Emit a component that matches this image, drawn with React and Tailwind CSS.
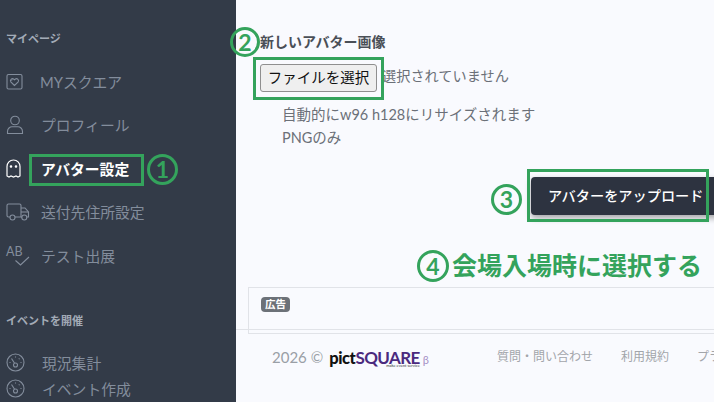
import React from "react";

const font = { fontFamily: '"Lato", "Noto Sans CJK JP", sans-serif' };

const HeartSquareIcon = () => (
  <svg width="18" height="18" viewBox="0 0 18 18" fill="none" stroke="currentColor" strokeWidth="1.1">
    <rect x="1" y="1.5" width="15" height="14.5" rx="1.5" />
    <path d="M8.5 12.5 L4.8 8.8 C3.6 7 5.8 4.8 7.6 6 L8.5 6.8 L9.4 6 C11.2 4.8 13.4 7 12.2 8.8 Z" />
    <path d="M5.5 7.8 C5.4 7.2 6 6.6 6.6 6.7" strokeWidth="0.7" />
  </svg>
);

const UserIcon = () => (
  <svg width="18" height="20" viewBox="0 0 18 20" fill="none" stroke="currentColor" strokeWidth="1.1">
    <circle cx="9" cy="5.5" r="4.3" />
    <path d="M1.5 18.5 V16.5 C1.5 13.5 4 11.8 6 11.8 H12 C14 11.8 16.5 13.5 16.5 16.5 V18.5 Z" />
  </svg>
);

const GhostIcon = () => (
  <svg width="15" height="19" viewBox="0 0 15 19" fill="none" stroke="currentColor" strokeWidth="1.2">
    <path d="M1 17 V7.5 C1 3.8 3.8 1 7.5 1 C11.2 1 14 3.8 14 7.5 V17 L12 18 L10 17 L7.5 18 L5 17 L3 18 Z" />
    <circle cx="5" cy="7.5" r="0.7" fill="currentColor" />
    <circle cx="10" cy="7.5" r="0.7" fill="currentColor" />
  </svg>
);

const TruckIcon = () => (
  <svg width="24" height="18" viewBox="0 0 24 18" fill="none" stroke="currentColor" strokeWidth="1.1">
    <path d="M4 14 H2.5 C1.5 14 1 13.4 1 12.5 V2.5 C1 1.5 1.6 1 2.5 1 H13.5 C14.4 1 15 1.5 15 2.5 V14 H9" />
    <path d="M15 5 H19 L22.5 9 V14 H20.5" />
    <path d="M15 9 H22" />
    <path d="M15 14 H16" />
    <circle cx="6.5" cy="14.5" r="2.5" />
    <circle cx="18.3" cy="14.5" r="2.5" />
  </svg>
);

const ChecksIcon = () => (
  <svg width="24" height="22" viewBox="0 0 24 22" fill="none" stroke="currentColor" strokeWidth="1.1">
    <path d="M9.5 15.5 L14.5 20 L23 12" />
  </svg>
);

const GaugeIcon = () => (
  <svg width="19" height="19" viewBox="0 0 19 19" fill="none" stroke="currentColor" strokeWidth="1.1">
    <circle cx="9.5" cy="9.5" r="8.5" />
    <circle cx="9.5" cy="12" r="2" />
    <path d="M8.6 10.2 L5.5 5.5" />
    <path d="M9.5 3.5 V4.5 M13.5 5.5 L12.8 6.2 M15.5 9.5 H14.5 M4.5 9.5 H3.5" />
  </svg>
);

const navItems = [
  { label: "MYスクエア", icon: <HeartSquareIcon />, text: "ml-[16px]" },
  { label: "プロフィール", icon: <UserIcon />, text: "ml-[17px]" },
  { label: "アバター設定", icon: <GhostIcon />, text: "ml-[20px]", active: true },
  { label: "送付先住所設定", icon: <TruckIcon />, text: "ml-[11px]" },
  { label: "テスト出展", icon: null, text: "ml-[11px]" },
];

const Marker = ({ n, className }) => (
  <div
    className={`absolute flex items-center justify-center rounded-full border-[3px] border-[#34a35c] bg-transparent text-[23px] leading-none font-bold text-[#34a35c] ${className}`}
  >
    {n}
  </div>
);

const Sidebar = () => (
  <aside className="flex h-[402px] w-[236px] shrink-0 flex-col overflow-hidden bg-[#333b48] pt-[31px] pl-[6px]">
    <p className="text-[11px] leading-[15px] font-bold text-[#a3abb7]">マイページ</p>
    <ul className="mt-[14px] flex flex-col">
      {navItems.map((item) => (
        <li key={item.label} className={`flex h-[43.5px] items-center ${item.active ? "text-white" : "text-[#838d9c]"}`}>
          {item.icon ? (
            item.icon
          ) : (
            <span className="relative flex h-[22px] w-[24px] shrink-0">
              <span className="text-[12.5px] leading-[14px]">AB</span>
              <span className="absolute top-0 left-0">
                <ChecksIcon />
              </span>
            </span>
          )}
          <span className={`text-[14.8px] ${item.active ? "font-bold" : ""} ${item.text}`}>{item.label}</span>
        </li>
      ))}
    </ul>
    <p className="mt-[35px] text-[11px] leading-[15px] font-bold text-[#a3abb7]">イベントを開催</p>
    <div className="mt-[22px] flex h-[43.5px] items-center text-[#838d9c]">
      <GaugeIcon />
      <span className="ml-[17px] text-[14.8px]">現況集計</span>
    </div>
    <div className="flex h-[43.5px] items-center text-[#838d9c]">
      <GaugeIcon />
      <span className="ml-[17px] text-[14.8px]">イベント作成</span>
    </div>
  </aside>
);

const Footer = () => (
  <footer className="mt-[12px] flex items-center whitespace-nowrap pl-[36px]">
    <span className="text-[15px] text-[#9a9fa6]">2026 ©</span>
    <span className="ml-[6px] flex items-baseline">
      <span className="text-[16.5px] leading-none font-black tracking-[-0.4px] text-[#111]">pict</span>
      <span className="relative text-[17px] leading-none font-bold tracking-[-0.6px] text-[#4b2a7e]">
        SQUARE
        <span className="absolute top-[15px] right-0 text-[4px] leading-none font-normal tracking-normal text-[#333]">
          make event service
        </span>
      </span>
      <span className="ml-[3px] text-[11px] leading-none text-[#a58fc5]">β</span>
    </span>
    <a className="ml-[68px] text-[12px] text-[#a2a5aa]">質問・問い合わせ</a>
    <a className="ml-[28px] text-[12px] text-[#a2a5aa]">利用規約</a>
    <a className="ml-[28px] text-[12px] text-[#a2a5aa]">プライバシー</a>
  </footer>
);

export default function App() {
  return (
    <div className="relative flex h-[402px] w-[714px] overflow-hidden bg-[#f9fafe]" style={font}>
      <Sidebar />

      <main className="min-w-0 flex-1 whitespace-nowrap">
        <div className="pt-[32px] pl-[24px]">
          <label className="block text-[14px] leading-[20px] font-bold text-[#4a4f57]">新しいアバター画像</label>
          <div className="mt-[12px] flex items-center">
            <button className="h-[28px] w-[117px] rounded-[3px] border border-[#8f8f8f] bg-[#efefef] text-[14.5px] text-[#111]">
              ファイルを選択
            </button>
            <span className="ml-[5px] -translate-y-[2px] text-[14.2px] text-[#6b7078]">選択されていません</span>
          </div>
          <div className="mt-[11px] pl-[22px] text-[14.5px] leading-[23px] text-[#6b7078]">
            <p>自動的にw96 h128にリサイズされます</p>
            <p>PNGのみ</p>
          </div>
        </div>

        <div className="mt-[28px] flex justify-start pl-[295px]">
          <button className="h-[38px] w-[200px] shrink-0 rounded-l-[4px] bg-[#2d3340] pl-[17px] text-left text-[14.2px] font-medium text-white shadow-[0_3px_6px_rgba(0,0,0,0.35)]">
            アバターをアップロード
          </button>
        </div>

        <div className="mt-[72px] ml-[12px] h-[47px] border-t border-b border-l border-[#e1e3e8]">
          <span className="mt-[9px] ml-[12px] inline-block rounded-[4px] bg-[#6c7178] px-[4px] text-[10.5px] leading-[15px] font-bold text-white">
            広告
          </span>
        </div>
        <Footer />
      </main>

      {/* annotations drawn over the page */}
      <div className="absolute top-[154px] left-[29px] h-[32px] w-[115px] border-[3px] border-[#34a35c]" />
      <div className="absolute top-[57px] left-[253px] h-[43px] w-[131px] border-[3px] border-[#34a35c]" />
      <div className="absolute top-[169px] left-[527px] h-[53px] w-[182px] border-[3px] border-[#34a35c]" />
      <Marker n="1" className="top-[154px] left-[147px] h-[31px] w-[31px]" />
      <Marker n="2" className="top-[27px] left-[230px] h-[30px] w-[30px]" />
      <Marker n="3" className="top-[184px] left-[491px] h-[31px] w-[31px]" />
      <Marker n="4" className="top-[250px] left-[417px] h-[32px] w-[32px]" />
      <span className="absolute top-[247px] left-[452px] text-[25px] leading-[36px] font-bold whitespace-nowrap text-[#34a35c]">
        会場入場時に選択する
      </span>
      <div className="absolute top-[329px] left-[236px] h-px w-[478px] bg-[#e1e3e8]" />
    </div>
  );
}
